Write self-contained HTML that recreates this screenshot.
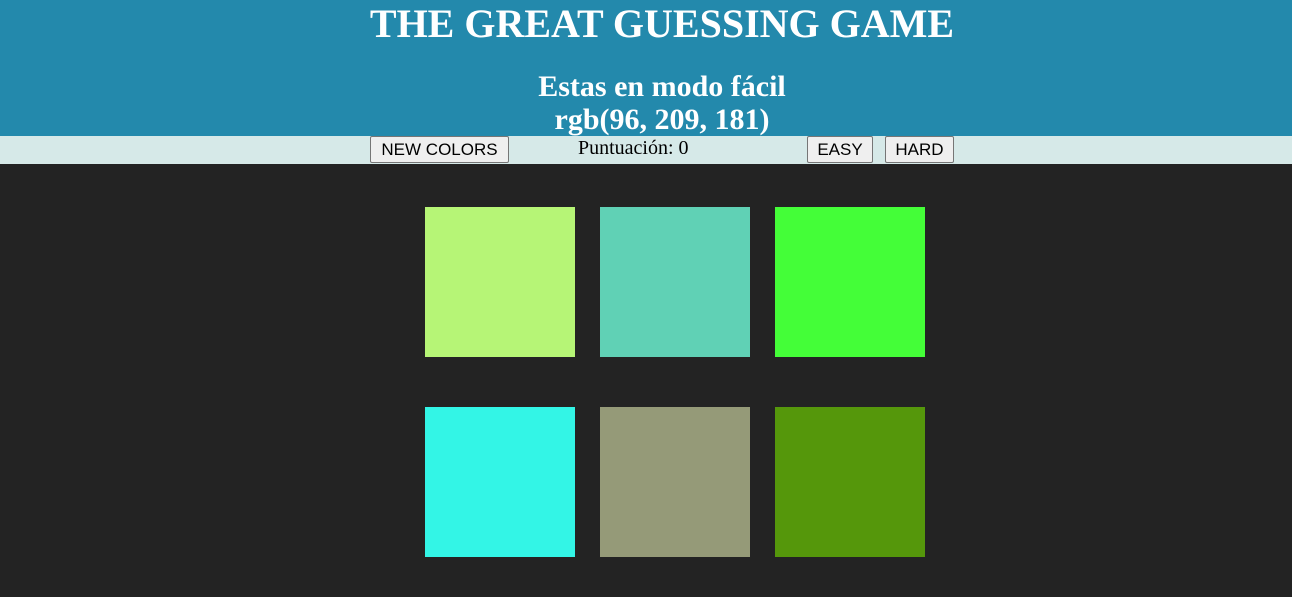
<!DOCTYPE html>
<html><head><meta charset="utf-8"><style>
*{margin:0;padding:0;box-sizing:border-box}
body{width:1292px;height:597px;background:#232323;overflow:hidden;position:relative;font-family:"Liberation Serif",serif}
#hdr{position:absolute;left:0;top:0;width:1292px;height:136px;background:#2389ac;color:#fff;font-weight:bold}
.c{position:absolute;left:0;width:1324px;text-align:center;white-space:nowrap}
#bar{position:absolute;left:0;top:136px;width:1292px;height:28px;background:#d6e9e8}
.b{position:absolute;top:0;height:27px;background:#efefef;border:1px solid #767676;border-radius:2px;font-family:"Liberation Sans",sans-serif;font-size:17px;color:#000;text-align:center;line-height:25px}
.sq{position:absolute;width:150px;height:150px}
</style></head><body>
<div id="hdr">
<div class="c" style="top:2px;font-size:40px;line-height:44px">THE GREAT GUESSING GAME</div>
<div class="c" style="top:70px;font-size:30px;line-height:33px">Estas en modo fácil</div>
<div class="c" style="top:103px;font-size:30px;line-height:33px">rgb(96, 209, 181)</div>
</div>
<div id="bar">
<div class="b" style="left:370px;width:139px">NEW COLORS</div>
<div style="position:absolute;left:578px;top:1px;font-size:20px;line-height:22px;color:#000">Puntuación: 0</div>
<div class="b" style="left:807px;width:66px">EASY</div>
<div class="b" style="left:885px;width:69px">HARD</div>
</div>
<div class="sq" style="left:425px;top:207px;background:#b6f576"></div>
<div class="sq" style="left:600px;top:207px;background:#60d1b5"></div>
<div class="sq" style="left:775px;top:207px;background:#44fe38"></div>
<div class="sq" style="left:425px;top:407px;background:#33f5e6"></div>
<div class="sq" style="left:600px;top:407px;background:#959a78"></div>
<div class="sq" style="left:775px;top:407px;background:#55970b"></div>
</body></html>
